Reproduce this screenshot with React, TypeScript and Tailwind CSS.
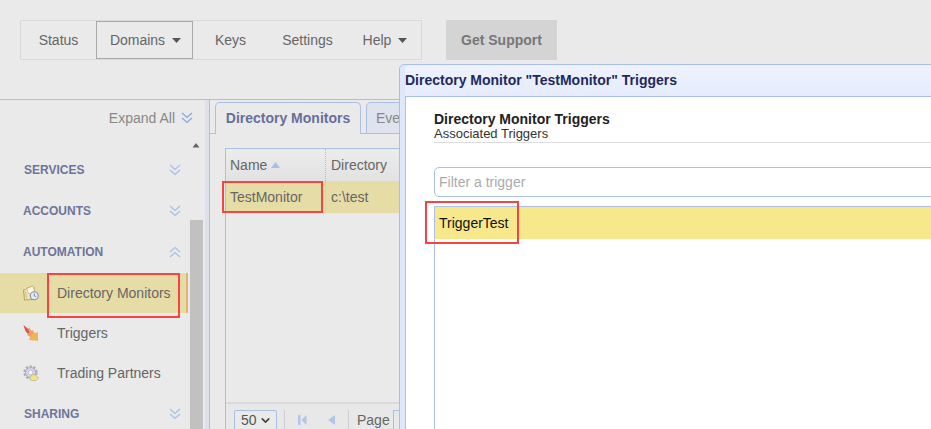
import { ChevronDown } from 'lucide-react'

const Caret = ({ gap }: { gap: string }) => (
  <svg width="9" height="5" viewBox="0 0 9 5" className={gap}>
    <path d="M0 0h9L4.5 5z" fill="#555" />
  </svg>
)

const DoubleChevron = ({ up, color }: { up?: boolean; color: string }) => (
  <svg width="12" height="12" viewBox="0 0 12 12" fill="none" stroke={color} strokeWidth="1.3">
    {up ? (
      <path d="M1 6l5-4.5L11 6M1 11l5-4.5L11 11" />
    ) : (
      <path d="M1 1l5 4.5L11 1M1 6l5 4.5L11 6" />
    )}
  </svg>
)

const FolderIcon = () => (
  <svg width="16" height="16" viewBox="0 0 16 16">
    <path d="M0.5 5l2-.5 1-1 6-2.5 1.5 1.5v9l-2 3-7.5.5z" fill="#f0e2ac" stroke="#ad9a60" strokeWidth="0.9" />
    <path d="M4 3.5l6-2.5 1.5 6-6 2z" fill="#fdf9e6" stroke="#c4b27a" strokeWidth="0.6" />
    <path d="M2.5 6.5l1 7" stroke="#c9b777" strokeWidth="0.8" />
    <circle cx="11.3" cy="10.8" r="4" fill="#e3e9f3" stroke="#7f93ab" strokeWidth="1.1" />
    <path d="M11.3 8.5v2.4l1.6.9" stroke="#5d728c" strokeWidth="0.8" fill="none" />
  </svg>
)

const TriggerIcon = () => (
  <svg width="16" height="16" viewBox="0 0 16 16">
    <path d="M0.5 0l4.5 4 1.2-1.5L8.5 6l1.6-1 1 3L15 7.5V15.5L6 15l1.5-3-3.5-2 1-1.5L2.5 6z" fill="#ec9f66" />
    <path d="M0.5 0l4.5 4 1.5 4-2 .5-2-2.5z" fill="#d8564c" />
    <path d="M9 9l6-1.5v8L6.5 15z" fill="#f1b455" />
  </svg>
)

const GearIcon = () => (
  <svg width="16" height="16" viewBox="0 0 16 16">
    <circle cx="7.5" cy="7.5" r="6" fill="none" stroke="#a9a9c4" strokeWidth="2.4" strokeDasharray="2.2 1.6" />
    <circle cx="7.5" cy="7.5" r="5" fill="#d6d6e6" stroke="#a0a0bc" strokeWidth="0.8" />
    <circle cx="7.5" cy="7.5" r="2.4" fill="#f4f4f8" stroke="#a4a4bc" strokeWidth="0.6" />
    <path d="M6.5 13l3-3.5 3 .5 3 3-2.5 2.5H8.5z" fill="#efe48a" stroke="#b3a84e" strokeWidth="0.6" />
  </svg>
)

function Section({ label, open, left }: { label: string; open?: boolean; left: string }) {
  return (
    <div className="flex h-[41px] items-center justify-between pr-[7px]">
      <span className={`text-[12px] font-bold text-[#6d7599] ${left}`}>{label}</span>
      <DoubleChevron up={open} color="#a9bfe8" />
    </div>
  )
}

function NavRow({ label, icon, active }: { label: string; icon: React.ReactNode; active?: boolean }) {
  return (
    <div className={`relative flex h-[40px] items-center pl-[23px] ${active ? 'bg-[#e6dca6] border-r-[2px] border-[#e2b36b]' : ''}`}>
      <span className="flex w-[34px] shrink-0">{icon}</span>
      <span className="text-[14px] text-[#666]">{label}</span>
      {active && <div className="absolute left-[47px] top-0 h-[45px] w-[133px] border-[2px] border-[#f44444]" />}
    </div>
  )
}

export default function App() {
  return (
    <div className="relative flex h-[429px] w-[931px] flex-col overflow-hidden bg-[#eaeaea] font-['Liberation_Sans',Arial,sans-serif]">
      {/* top bar */}
      <header className="flex h-[100px] shrink-0 items-start gap-[24px] border-b border-[#a9bfe8] pl-[20px] pt-[20px]">
        <nav className="flex h-[40px] w-[402px] items-stretch border border-[#d8d8d8] text-[14px] text-[#666]">
          <a className="flex w-[75px] items-center justify-center">Status</a>
          <a className="flex w-[97px] items-center justify-center border border-[#aaa] pl-[2px]">
            Domains
            <Caret gap="ml-[7px]" />
          </a>
          <a className="flex w-[75px] items-center justify-center">Keys</a>
          <a className="flex w-[79px] items-center justify-center">Settings</a>
          <a className="flex w-[74px] items-center justify-center pl-[2px]">
            Help
            <Caret gap="ml-[7px]" />
          </a>
        </nav>
        <button className="h-[40px] w-[111px] bg-[#d4d4d4] text-[14px] font-bold text-[#777]">Get Support</button>
      </header>

      <div className="flex min-h-0 flex-1">
        {/* sidebar */}
        <aside className="flex w-[205px] shrink-0 flex-col">
          <div className="flex h-[36px] shrink-0 items-center justify-end pr-[12px] text-[14px] text-[#888]">
            Expand All
            <span className="ml-[6px] flex">
              <DoubleChevron color="#8aa8e0" />
            </span>
          </div>
          <div className="flex min-h-0 flex-1 pr-[2px]">
            <div className="w-[188px] shrink-0 pt-[13px]">
              <Section label="SERVICES" left="ml-[24px]" />
              <Section label="ACCOUNTS" left="ml-[23px]" />
              <Section label="AUTOMATION" left="ml-[23px]" open />
              <div className="mt-[1px]">
                <NavRow label="Directory Monitors" icon={<FolderIcon />} active />
                <NavRow label="Triggers" icon={<TriggerIcon />} />
                <NavRow label="Trading Partners" icon={<GearIcon />} />
              </div>
              <Section label="SHARING" left="ml-[24px]" />
            </div>
            <div className="flex w-[15px] flex-col pl-[2px]">
              <svg width="13" height="84" viewBox="0 0 13 84" className="shrink-0">
                <path d="M2.5 11.5h7L6 7z" fill="#666" />
              </svg>
              <div className="flex-1 bg-[#c1c1c1]" />
            </div>
          </div>
        </aside>
        <div className="w-[5px] shrink-0 border-r border-[#a9bfe8] bg-[#dde1ec]" />

        {/* main */}
        <main className="flex min-w-0 flex-1 flex-col">
          <div className="flex h-[34px] shrink-0 items-end gap-[5px] border-b border-[#a9bfe8] pl-[5px]">
            <div className="relative top-px flex h-[32px] w-[146px] items-center justify-center rounded-t-[5px] border border-b-0 border-[#a9bfe8] bg-[#eaeaea] text-[14px] font-bold text-[#67709a]">
              Directory Monitors
            </div>
            <div className="flex h-[31px] w-[90px] items-center rounded-t-[5px] border border-b-0 border-[#a9bfe8] bg-[#dfe3ee] pl-[9px] text-[14px] text-[#888]">
              Events
            </div>
          </div>
          <div className="flex min-h-0 flex-1 pl-[15px] pt-[14px]">
            <div className="flex w-[500px] flex-col border-l border-t border-[#a9bfe8]">
              <div className="flex h-[32px] shrink-0 bg-gradient-to-b from-[#ececec] to-[#e2e2e2] text-[14px] text-[#666]">
                <div className="flex w-[100px] items-center border-r border-dotted border-[#bbb] pl-[4px]">
                  Name
                  <svg width="9" height="6" viewBox="0 0 9 6" className="ml-[4px]">
                    <path d="M0 6h9L4.5 0z" fill="#a9bfe8" />
                  </svg>
                </div>
                <div className="flex items-center pl-[5px]">Directory</div>
              </div>
              <div className="relative flex h-[32px] shrink-0 bg-[#e6dca6] text-[14px] text-[#666]">
                <div className="flex w-[100px] items-center border-r border-dotted border-[#ccc] pl-[4px]">TestMonitor</div>
                <div className="flex items-center pl-[5px]">c:\test</div>
                <div className="absolute left-[-4px] top-0 h-[32px] w-[101px] border-[2px] border-[#f44444]" />
              </div>
              <div className="flex-1" />
              <div className="flex h-[27px] shrink-0 items-start border-t-[2px] border-[#dadada] bg-[#e8e8e8] pl-[8px] pt-[6px] text-[14px] text-[#666]">
                <div className="flex h-[20px] w-[43px] shrink-0 items-center justify-between rounded-t-[2px] border border-[#a9bfe8] bg-[#eaeaea] pl-[6px] pr-[4px] text-[#555]">
                  50
                  <ChevronDown size={13} strokeWidth={3} className="text-[#444]" />
                </div>
                <div className="ml-[7px] h-[20px] w-px bg-[#ccc]" />
                <svg width="62" height="14" viewBox="0 0 62 14" className="mt-[3px] shrink-0">
                  <path d="M13 2h2.5v10H13zM21.5 2v10l-5-5zM50 2v10l-7-5z" fill="#b4c6e8" />
                </svg>
                <div className="ml-[1px] h-[20px] w-px bg-[#ccc]" />
                <span className="ml-[8px] leading-[20px]">Page</span>
                <div className="ml-[3px] h-[20px] w-[40px] border border-[#a9bfe8]" />
              </div>
            </div>
          </div>
        </main>
      </div>

      {/* dialog */}
      <section className="absolute left-[399px] top-[64px] flex h-[400px] w-[600px] flex-col rounded-tl-[5px] border border-[#a9bfe8] bg-[#dfe8fb] pl-[5px]">
        <div className="flex h-[31px] shrink-0 items-center rounded-tl-[5px] bg-gradient-to-b from-[#eef2fe] to-[#e6ecfc] text-[14px] font-bold text-[#1f2a5c]">
          Directory Monitor "TestMonitor" Triggers
        </div>
        <div className="flex-1 border border-[#a9bfe8] bg-white pl-[28px]">
          <div className="border-b border-[#ddd] pb-[1px] pt-[14px]">
            <h2 className="text-[14px] font-bold leading-[16px] text-[#222]">Directory Monitor Triggers</h2>
            <p className="text-[13px] leading-[14px] text-[#333]">Associated Triggers</p>
          </div>
          <input
            placeholder="Filter a trigger"
            className="mt-[24px] block h-[30px] w-full rounded-l-[5px] border border-[#a9bfe8] pl-[4px] text-[14px] outline-none placeholder:text-[#aaa]"
          />
          <div className="mt-[9px] h-[300px] border border-[#a9bfe8]">
            <div className="relative flex h-[32px] items-center bg-[#f8e88c] pl-[4px] text-[14px] text-[#111]">
              TriggerTest
              <div className="absolute left-[-10px] top-[-6px] h-[43px] w-[94px] border-[2px] border-[#f44444]" />
            </div>
          </div>
        </div>
      </section>
    </div>
  )
}
